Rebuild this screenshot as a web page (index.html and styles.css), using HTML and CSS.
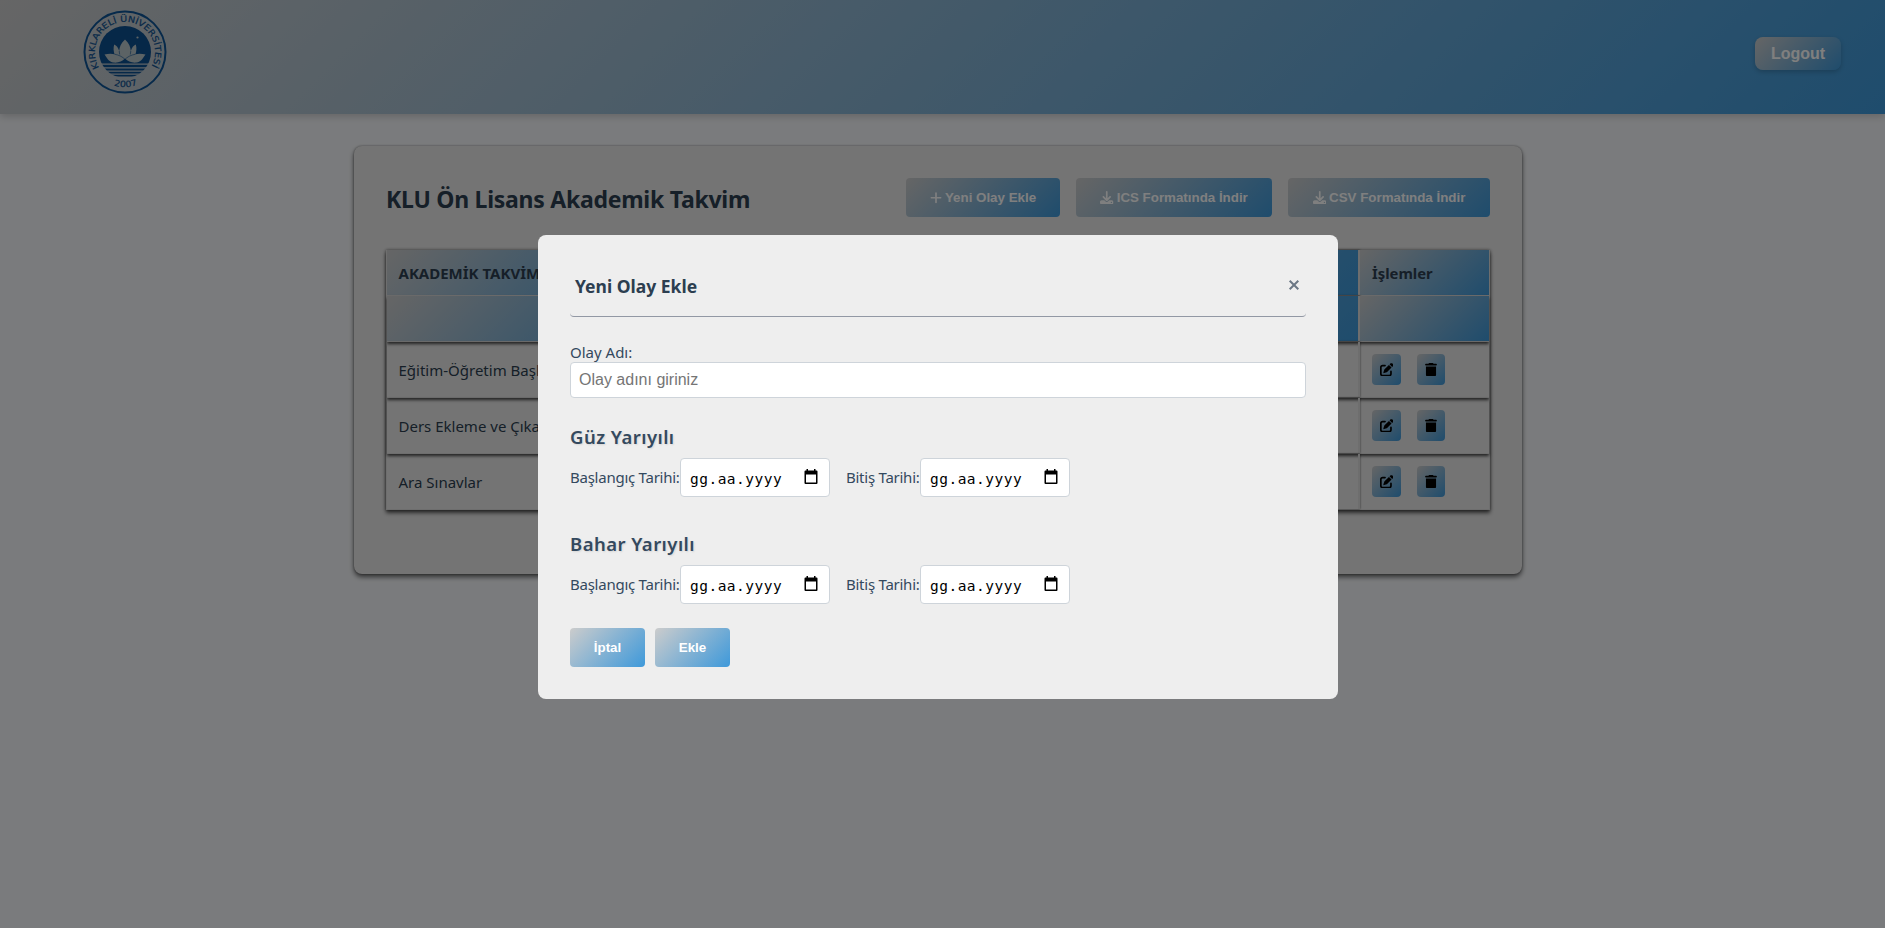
FILE: index.html
```html
<!DOCTYPE html>
<html lang="tr">
<head>
<meta charset="utf-8">
<title>KLU Akademik Takvim</title>
<link rel="stylesheet" href="styles.css">
</head>
<body>
<svg class="sprite" aria-hidden="true">
  <symbol id="i-plus" viewBox="0 0 448 512"><path d="M256 80c0-17.700-14.300-32-32-32s-32 14.300-32 32v144H48c-17.700 0-32 14.300-32 32s14.300 32 32 32h144v144c0 17.700 14.300 32 32 32s32-14.300 32-32V288h144c17.700 0 32-14.300 32-32s-14.300-32-32-32H256z"/></symbol>
  <symbol id="i-download" viewBox="0 0 512 512"><path d="M288 32c0-17.700-14.300-32-32-32s-32 14.300-32 32v242.700l-73.400-73.400c-12.500-12.500-32.800-12.500-45.300 0s-12.500 32.800 0 45.300l128 128c12.500 12.500 32.800 12.500 45.300 0l128-128c12.500-12.500 12.500-32.800 0-45.300s-32.800-12.500-45.300 0L288 274.700zM64 352c-35.300 0-64 28.700-64 64v32c0 35.300 28.700 64 64 64h384c35.300 0 64-28.700 64-64v-32c0-35.300-28.700-64-64-64H346.500l-45.300 45.300c-25 25-65.500 25-90.500 0L165.500 352zm368 56a24 24 0 1 1 0 48 24 24 0 1 1 0-48z"/></symbol>
  <symbol id="i-edit" viewBox="0 0 512 512"><path d="M471.600 21.700c-21.900-21.900-57.300-21.900-79.200 0L362.300 51.700l97.900 97.900 30.100-30.100c21.900-21.900 21.900-57.300 0-79.200zm-299.200 220c-6.100 6.100-10.800 13.600-13.500 21.900l-29.600 88.800c-2.900 8.600-.6 18.100 5.800 24.600s15.900 8.700 24.600 5.800l88.800-29.600c8.200-2.700 15.700-7.400 21.900-13.500L437.700 172.300 339.700 74.300zM96 64c-53 0-96 43-96 96v256c0 53 43 96 96 96h256c53 0 96-43 96-96v-96c0-17.700-14.300-32-32-32s-32 14.300-32 32v96c0 17.700-14.300 32-32 32H96c-17.700 0-32-14.300-32-32V160c0-17.700 14.300-32 32-32h96c17.700 0 32-14.300 32-32s-14.300-32-32-32z"/></symbol>
  <symbol id="i-trash" viewBox="0 0 448 512"><path d="M135.200 17.700C140.600 6.800 151.700 0 163.800 0h120.400c12.100 0 23.200 6.800 28.600 17.700L320 32h96c17.700 0 32 14.300 32 32s-14.300 32-32 32H32C14.300 96 0 81.700 0 64s14.300-32 32-32h96zM32 128h384v320c0 35.300-28.700 64-64 64H96c-35.300 0-64-28.700-64-64z"/></symbol>
  <symbol id="i-cal" viewBox="0 0 14 16"><path fill-rule="evenodd" d="M2.500 0h1.500v1.500h6V0h1.500v1.500H12.500Q13.500 1.500 13.500 2.500V14Q13.500 15 12.500 15H1.500Q.5 15 .5 14V2.500Q.5 1.500 1.500 1.500h1zM2 5.500v8h10v-8z"/></symbol>
</svg>

<header class="topbar">
  <svg class="logo" viewBox="-42 -42 84 84">
    <defs>
      <path id="arc-top" d="M-25.800 15.500A30.100 30.100 0 1 1 25.800 15.500"/>
      <path id="arc-bottom" d="M-14 32.200A35 35 0 0 0 14 32.200"/>
      <clipPath id="disc"><circle r="26"/></clipPath>
    </defs>
    <circle class="logo-ring" r="40.500"/>
    <g clip-path="url(#disc)">
      <path class="logo-blue" d="M-26-26H26V11.500H-26zM-26 12.700H26V15.200H-26zM-26 16.500H26V18.500H-26zM-26 19.800H26V21.500H-26zM-26 22.800H26V24.500H-26z"/>
    </g>
    <path class="logo-lotus" d="M0-12.500C4-9 5.500-5 5.800-1 6.800-4.500 8.500-6.500 10.800-7.500 11.800-4 11.500-1 10.500 2.200 13.500 1.300 17 1.500 20.500 2.500 18 6 16.500 9.500 12 10.500 7 11.200 3 9.500 0 6.500-3 9.500-7 11.200-12 10.500-16.500 9.500-18 6-20.500 2.500-17 1.500-13.500 1.300-10.500 2.200-11.500-1-11.800-4-10.800-7.500-8.500-6.500-6.800-4.500-5.800-1-5.500-5-4-9 0-12.500z"/>
    <path class="logo-vein" d="M-10.500 2.200C-6 3 -2 5 0 7.500 2 5 6 3 10.500 2.200M-5.800-1-5.300 2.500M5.800-1 5.300 2.500"/>
    <circle class="logo-star" cx="12.500" cy="-14.500" r="1.100"/>
    <text class="logo-text"><textPath href="#arc-top" textLength="125" lengthAdjust="spacingAndGlyphs">KIRKLARELİ ÜNİVERSİTESİ</textPath></text>
    <text class="logo-text"><textPath href="#arc-bottom" startOffset="3" textLength="24" lengthAdjust="spacingAndGlyphs">2007</textPath></text>
  </svg>
  <button class="logout">Logout</button>
</header>

<main class="card">
  <div class="card-head">
    <h1 class="card-title">KLU Ön Lisans Akademik Takvim</h1>
    <div class="actions">
      <button class="btn btn-new"><svg class="ic ic-plus"><use href="#i-plus"/></svg><span>Yeni Olay Ekle</span></button>
      <button class="btn btn-ics"><svg class="ic"><use href="#i-download"/></svg><span>ICS Formatında İndir</span></button>
      <button class="btn btn-csv"><svg class="ic"><use href="#i-download"/></svg><span>CSV Formatında İndir</span></button>
    </div>
  </div>
  <div class="table">
    <div class="row row-head"><div class="cell">AKADEMİK TAKVİM</div><div class="cell"></div><div class="cell">İşlemler</div></div>
    <div class="row row-head row-sub"><div class="cell"></div><div class="cell"></div><div class="cell"></div></div>
    <div class="row"><div class="cell">Eğitim-Öğretim Başlangıcı</div><div class="cell"></div><div class="cell tools"><button class="tool"><svg class="ti"><use href="#i-edit"/></svg></button><button class="tool tool-del"><svg class="ti ti-trash"><use href="#i-trash"/></svg></button></div></div>
    <div class="row"><div class="cell">Ders Ekleme ve Çıkarma</div><div class="cell"></div><div class="cell tools"><button class="tool"><svg class="ti"><use href="#i-edit"/></svg></button><button class="tool tool-del"><svg class="ti ti-trash"><use href="#i-trash"/></svg></button></div></div>
    <div class="row"><div class="cell">Ara Sınavlar</div><div class="cell"></div><div class="cell tools"><button class="tool"><svg class="ti"><use href="#i-edit"/></svg></button><button class="tool tool-del"><svg class="ti ti-trash"><use href="#i-trash"/></svg></button></div></div>
  </div>
</main>

<div class="overlay">
  <section class="modal">
    <div class="modal-head">
      <h2 class="modal-title">Yeni Olay Ekle</h2>
      <svg class="close" viewBox="0 0 12 12"><path d="M1.700 1.700l8.600 8.600M10.300 1.700l-8.600 8.600"/></svg>
    </div>
    <label class="label">Olay Adı:</label>
    <input class="name" placeholder="Olay adını giriniz">
    <h3 class="term">Güz Yarıyılı</h3>
    <div class="dates">
      <span class="dl dl-start">Başlangıç Tarihi:</span><div class="date"><span class="mask">gg.aa.yyyy</span><svg class="cal"><use href="#i-cal"/></svg></div>
      <span class="dl dl-end">Bitiş Tarihi:</span><div class="date"><span class="mask">gg.aa.yyyy</span><svg class="cal"><use href="#i-cal"/></svg></div>
    </div>
    <h3 class="term term-2">Bahar Yarıyılı</h3>
    <div class="dates">
      <span class="dl dl-start">Başlangıç Tarihi:</span><div class="date"><span class="mask">gg.aa.yyyy</span><svg class="cal"><use href="#i-cal"/></svg></div>
      <span class="dl dl-end">Bitiş Tarihi:</span><div class="date"><span class="mask">gg.aa.yyyy</span><svg class="cal"><use href="#i-cal"/></svg></div>
    </div>
    <div class="foot"><button class="btn">İptal</button><button class="btn">Ekle</button></div>
  </section>
</div>
</body>
</html>
```
FILE: styles.css
```css
* { box-sizing: border-box; }
html, body { height: 100%; }
body {
  margin: 0;
  overflow: hidden;
  background: #f5f7fa;
  color: #2c3e50;
  font-family: "Noto Sans", "Open Sans", sans-serif;
  font-size: 15px;
}
h1, h2, h3 { margin: 0; }
button { border: 0; padding: 0; font-family: "Liberation Sans", Arial, sans-serif; }
.sprite { display: none; }

.topbar {
  height: 114px;
  padding: 10px 44px 0 83px;
  display: flex;
  justify-content: space-between;
  align-items: flex-start;
  background: linear-gradient(135deg, #ccc, #3e99da);
  box-shadow: 0 2px 8px rgba(0, 0, 0, .2);
}
.logo { width: 84px; height: 84px; }
.logo-ring { fill: none; stroke: #0f5596; stroke-width: 2; }
.logo-blue { fill: #0d5090; }
.logo-lotus { fill: #b9c6ca; }
.logo-vein { fill: none; stroke: #0d5090; stroke-width: .6; }
.logo-star { fill: #b9c6ca; }
.logo-text { fill: #0d5090; font: 400 8.500px "DejaVu Sans", sans-serif; stroke: #0d5090; stroke-width: .2; }
.logout {
  width: 86px;
  height: 33px;
  margin-top: 27px;
  border-radius: 8px;
  color: #fff;
  font-size: 16px;
  font-weight: 700;
  background: linear-gradient(135deg, #ccc, #3e99da);
  box-shadow: 0 2px 5px rgba(0, 0, 0, .2);
}

.card {
  width: 1168px;
  height: 428px;
  margin: 32px 0 0 354px;
  padding: 32px;
  border-radius: 8px;
  background: #e9e9e9;
  box-shadow: 0 3px 5px rgba(0, 0, 0, .6), 0 0 2px rgba(0, 0, 0, .4);
}
.card-head { display: flex; justify-content: space-between; height: 39px; align-items: center; }
.card-title { padding-top: 3px; font-size: 23px; letter-spacing: -.260px; white-space: nowrap; }
.actions { display: flex; gap: 16px; }
.btn {
  height: 39px;
  display: flex;
  align-items: center;
  justify-content: center;
  gap: 3px;
  border-radius: 4px;
  color: #fff;
  font-size: 13.333px;
  font-weight: 700;
  white-space: nowrap;
  background: linear-gradient(135deg, #ccc, #3e99da);
}
.btn-new { width: 154px; }
.btn-ics { width: 196px; }
.btn-csv { width: 202px; }
.ic { width: 13.500px; height: 13.500px; fill: #fff; }
.ic-plus { width: 12px; }

.table { margin-top: 33px; border: 1px solid #ddd; border-top: 0; box-shadow: 0 3px 4px rgba(0, 0, 0, .6), 0 0 3px rgba(0, 0, 0, .5); }
.row { display: grid; grid-template-columns: 300px 1fr 130px; height: 56px; box-shadow: 0 2px 3px rgba(0, 0, 0, .7); border-bottom: 1px solid #ddd; }
.row + .row { position: relative; }
.row:last-child { height: 55px; box-shadow: none; border-bottom: 0; }
.row-head { height: 46px; box-shadow: none; font-weight: 700; }
.row-sub { box-shadow: 0 2px 3px rgba(0, 0, 0, .7); }
.cell { padding-left: 11.500px; display: flex; align-items: center; white-space: nowrap; }
.cell:nth-child(2) { border-right: 1px solid #ddd; box-shadow: 1px 0 2px rgba(0, 0, 0, .6); }
.cell:last-child { border-left: 1px solid #ddd; padding-left: 12px; }
.row-head .cell { background: linear-gradient(135deg, #ccc, #3e99da); }
.row-head .cell:last-child { font-size: 14.800px; }
.tools { gap: 16px; align-items: flex-start; padding-top: 12px; }
.tool { width: 29px; height: 31px; border-radius: 4px; display: flex; align-items: center; justify-content: center; background: linear-gradient(135deg, #ccc, #3e99da); }
.tool-del { width: 28px; }
.ti { width: 13.500px; height: 13.500px; }
.ti-trash { width: 12px; }

.overlay { position: fixed; inset: 0; background: rgba(0, 0, 0, .5); }
.modal {
  width: 800px;
  height: 464px;
  margin: 235px 0 0 538px;
  padding: 32px;
  border-radius: 8px;
  background: #eee;
}
.modal-head { height: 50px; display: flex; justify-content: space-between; align-items: center; padding: 0 6px 11px 5px; border-bottom: 1px solid #9298a4; border-radius: 4px; }
.modal-title { font-size: 17.500px; }
.close { width: 12px; height: 12px; margin-top: -2px; fill: none; stroke: #6b7785; stroke-width: 2; }
.label { display: block; margin-top: 24px; height: 21px; line-height: 22px; color: #34495e; }
.name { display: block; width: 736px; height: 36px; padding: 0 8px; border: 1px solid #ced4da; border-radius: 4px; background: #fff; font: 16px "Liberation Sans", Arial, sans-serif; }
.name::placeholder { color: #757575; }
.term { margin-top: 24px; height: 36px; line-height: 29px; font-size: 18.500px; font-weight: 600; letter-spacing: .450px; color: #34495e; text-shadow: 1px 1px 2px rgba(0, 0, 0, .1); }
.term-2 { margin-top: 32px; }
.dates { display: flex; align-items: center; height: 39px; color: #34495e; }
.dl { padding-bottom: 2px; white-space: nowrap; letter-spacing: -.250px; }
.dl-start { width: 110px; }
.dl-end { width: 74px; margin-left: 16px; }
.date { width: 150px; height: 39px; display: flex; align-items: center; justify-content: space-between; padding: 0 11px 0 9px; border: 1px solid #ced4da; border-radius: 4px; background: #fff; color: #000; }
.mask { padding-top: 2px; font: 14.500px "DejaVu Sans Mono", monospace; letter-spacing: .480px; }
.cal { width: 14px; height: 16px; margin-top: -2px; }
.foot { display: flex; gap: 10px; margin-top: 24px; }
.foot .btn { width: 75px; }
```
